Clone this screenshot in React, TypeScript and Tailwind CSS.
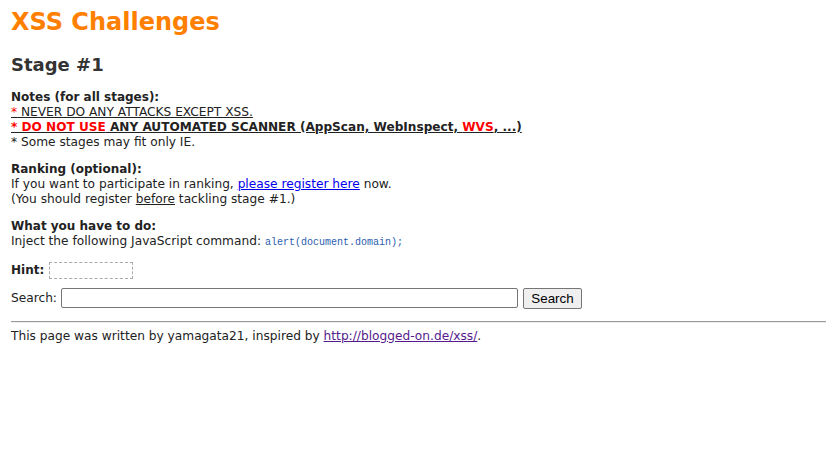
import React from "react";

export default function App() {
  const body = "font-['DejaVu_Sans',sans-serif] text-[12.2px] leading-[15px] text-[#222]";
  return (
    <div className={`min-h-[475px] w-[826px] bg-white pl-[11px] pt-[7px] ${body}`}>
      <h1 className="h-[30px] text-[24px] font-bold leading-[30px] text-[#ff8000]">XSS Challenges</h1>
      <h2 className="mt-[17px] h-[22px] text-[18px] font-bold leading-[22px] text-[#333]">Stage #1</h2>

      <div className="mt-[14px]">
        <div className="text-[12px] font-bold">Notes (for all stages):</div>
        <div>
          <span className="underline">
            <span className="text-[#ff0000]">*</span> NEVER DO ANY ATTACKS EXCEPT XSS.
          </span>
        </div>
        <div className="text-[12.1px] font-bold underline">
          <span className="text-[#ff0000]">* DO NOT USE</span> ANY AUTOMATED SCANNER (AppScan, WebInspect,{" "}
          <span className="text-[#ff0000]">WVS</span>, ...)
        </div>
        <div>* Some stages may fit only IE.</div>
      </div>

      <div className="mt-[12px]">
        <div className="text-[12px] font-bold">Ranking (optional):</div>
        <div>
          If you want to participate in ranking,{" "}
          <a className="text-[#0000ee] underline" href="#">
            please register here
          </a>{" "}
          now.
        </div>
        <div>
          (You should register <span className="underline">before</span> tackling stage #1.)
        </div>
      </div>

      <div className="mt-[12px]">
        <div className="text-[12px] font-bold">What you have to do:</div>
        <div>
          Inject the following JavaScript command:{" "}
          <code className="font-['Liberation_Mono',monospace] text-[10px] text-[#2a5db0]">alert(document.domain);</code>
        </div>
      </div>

      <div className="mt-[10px] flex h-[20px] items-center">
        <span className="text-[12px] font-bold">Hint:</span>
        <span className="ml-[5px] h-[17px] w-[84px] border border-dashed border-[#aaa]"></span>
      </div>

      <div className="mt-[7.5px] flex h-[21px] items-center">
        <span>Search:</span>
        <input
          type="text"
          className="ml-[4px] h-[20px] w-[457px] rounded-[2px] border border-[#767676] bg-white px-[2px] outline-none"
        />
        <button className="ml-[5px] h-[21px] w-[59px] rounded-[2px] border border-[#767676] bg-[#efefef] font-['Liberation_Sans',sans-serif] text-[13.33px] leading-[19px] text-black">
          Search
        </button>
      </div>

      <div className="mt-[12px] h-[2px] border-t border-b border-t-[#9a9a9a] border-b-[#eeeeee]"></div>

      <div className="mt-[6px]">
        This page was written by yamagata21, inspired by{" "}
        <a className="text-[#551a8b] underline" href="#">
          http://blogged-on.de/xss/
        </a>
        .
      </div>
    </div>
  );
}
